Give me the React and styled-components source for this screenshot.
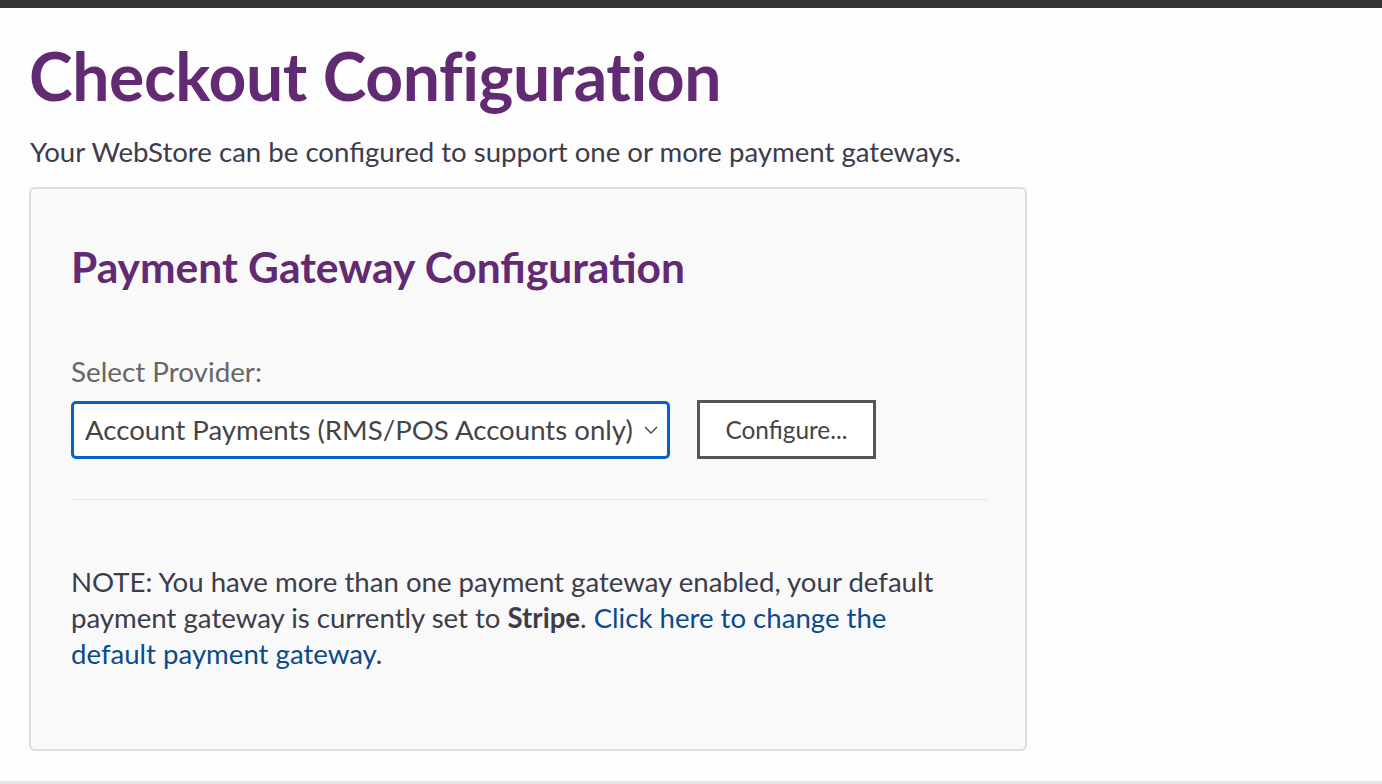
import React from 'react';
import styled, { createGlobalStyle } from 'styled-components';

const GlobalStyle = createGlobalStyle`
  html, body {
    margin: 0;
    padding: 0;
    background: #fdfdfd;
    font-family: Lato, "Open Sans", sans-serif;
  }
`

const Page = styled.div`
  height: 784px;
  box-sizing: border-box;
  border-top: 8px solid #333333;
  border-bottom: 3px solid #e6e6e6;
  padding: 28px 0 0 29px;
`

const Title = styled.h1`
  margin: 0;
  font-size: 66px;
  line-height: 80px;
  font-weight: 700;
  color: #612a72;
  letter-spacing: -0.4px;
`

const Intro = styled.p`
  margin: 19px 0 0 1px;
  font-size: 27.6px;
  line-height: 34px;
  color: #3c3c4a;
`

const Card = styled.section`
  margin-top: 18px;
  width: 998px;
  height: 564px;
  box-sizing: border-box;
  border: 2px solid #dedede;
  border-radius: 6px;
  background: #f9f9f9;
  padding: 50px 40px 0 40px;
`

const CardTitle = styled.h2`
  margin: 0;
  font-size: 42.5px;
  line-height: 56px;
  font-weight: 700;
  color: #612a72;
`

const Label = styled.label`
  display: block;
  margin-top: 60px;
  font-size: 27.8px;
  line-height: 34px;
  color: #666666;
`

const Row = styled.div`
  display: flex;
  align-items: center;
  gap: 27px;
  margin-top: 11px;
`

const SelectBox = styled.div`
  width: 599px;
  height: 58px;
  box-sizing: border-box;
  border: 3px solid #0a62c9;
  border-radius: 5px;
  background: #ffffff;
  display: flex;
  align-items: center;
  padding: 0 8px 0 11px;
  font-size: 27.6px;
  color: #454545;
  white-space: nowrap;
`

const Chevron = styled.svg`
  margin-left: auto;
  width: 16px;
  height: 10px;
`

const Button = styled.button`
  width: 179px;
  height: 59px;
  box-sizing: border-box;
  border: 3px solid #555555;
  background: #ffffff;
  font-family: inherit;
  font-size: 24.4px;
  color: #444444;
  padding: 0;
`

const Divider = styled.hr`
  margin: 40px 0 0 0;
  width: 916px;
  border: none;
  border-top: 1px solid #e4e4e4;
`

const Note = styled.p`
  margin: 64px 0 0 0;
  width: 900px;
  font-size: 27.6px;
  line-height: 36px;
  color: #3c3c4a;

  strong {
    font-weight: 700;
  }

  a {
    color: #0a4a8c;
    text-decoration: none;
  }
`

export default function App() {
  return (
    <>
      <GlobalStyle />
      <Page>
        <Title>Checkout Configuration</Title>
        <Intro>Your WebStore can be configured to support one or more payment gateways.</Intro>
        <Card>
          <CardTitle>Payment Gateway Configuration</CardTitle>
          <Label>Select Provider:</Label>
          <Row>
            <SelectBox>
              Account Payments (RMS/POS Accounts only)
              <Chevron viewBox="0 0 16 10">
                <path d="M2 2 L8 8 L14 2" fill="none" stroke="#444" strokeWidth="1.4" />
              </Chevron>
            </SelectBox>
            <Button>Configure...</Button>
          </Row>
          <Divider />
          <Note>
            NOTE: You have more than one payment gateway enabled, your default payment gateway is currently set to <strong>Stripe</strong>. <a href="#">Click here to change the default payment gateway</a>.
          </Note>
        </Card>
      </Page>
    </>
  );
}
